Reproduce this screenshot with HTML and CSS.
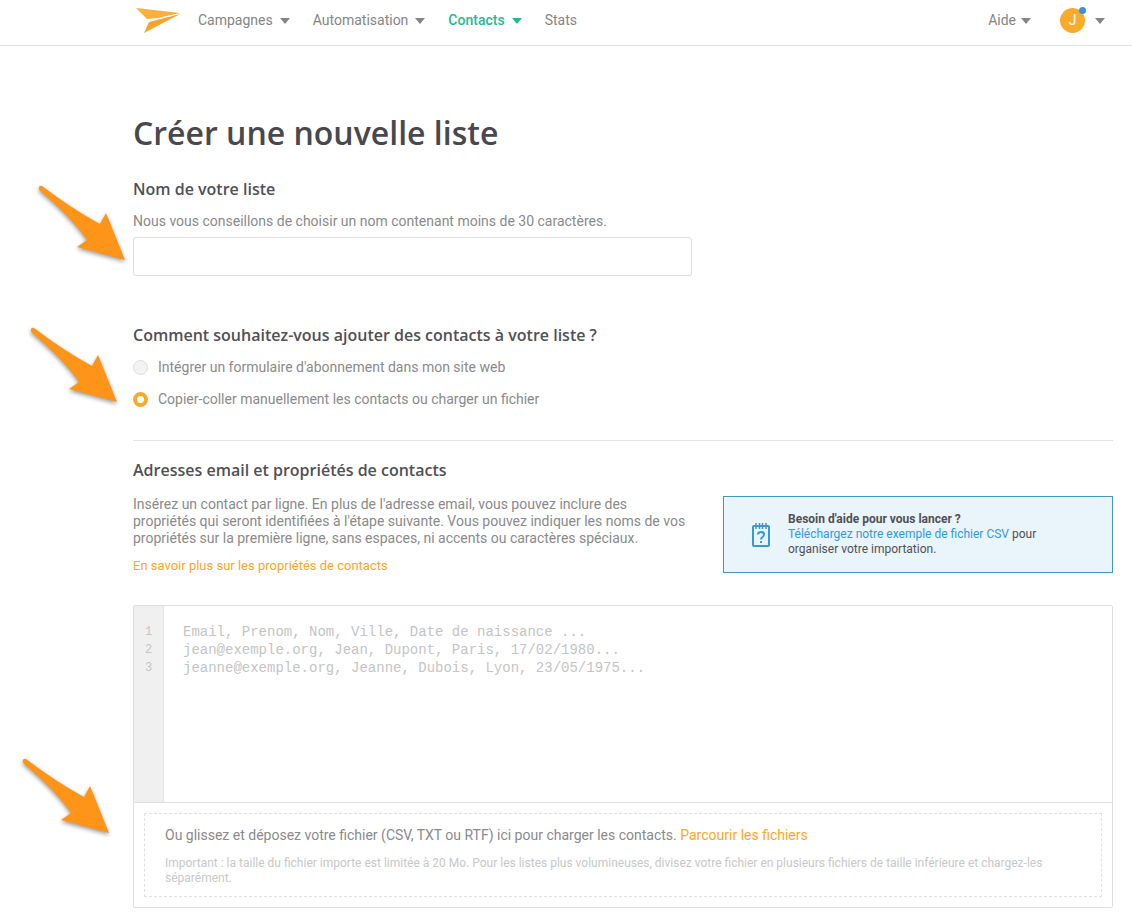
FILE: index.html
```html
<!DOCTYPE html>
<html lang="fr">
<head>
  <meta charset="UTF-8">
  <title>Créer une nouvelle liste</title>
  <meta name="viewport" content="width=device-width, initial-scale=1.0">
  <link rel="stylesheet" href="styles.css">
</head>

<body>

<svg class="sprite" aria-hidden="true">
  <symbol id="arrow" viewBox="0 0 94 86">
    <path d="M5 4 Q3 3 2 5 Q1 7 3 9 Q34 35 50 58 L40 65 L88 78 L69 31 L63 42 Q34 26 5 4 Z" fill="#ff9518"/>
  </symbol>
</svg>

<header class="topbar">
  <a href="#" class="logo" aria-label="Accueil">
    <svg width="46" height="28" viewBox="0 0 46 28">
      <path d="M1 1 L45 6 L23 11 L12 12 Z" fill="#fbb03b"/>
      <path d="M45 7 L9 26 L14 15 Z" fill="#f9a22c"/>
    </svg>
  </a>
  <nav class="menu">
    <a href="#">Campagnes <span class="caret"></span></a>
    <a href="#">Automatisation <span class="caret"></span></a>
    <a href="#" class="active">Contacts <span class="caret"></span></a>
    <a href="#">Stats</a>
  </nav>
  <div class="account">
    <a href="#" class="help">Aide <span class="caret"></span></a>
    <button type="button" class="user">
      <span class="avatar">J<span class="dot"></span></span>
      <span class="caret"></span>
    </button>
  </div>
</header>

<main class="page">
  <h1>Créer une nouvelle liste</h1>

  <form>
    <section class="block name-block">
      <svg class="pointer"><use href="#arrow"/></svg>
      <h2><label for="listName">Nom de votre liste</label></h2>
      <p class="hint">Nous vous conseillons de choisir un nom contenant moins de 30 caractères.</p>
      <input type="text" id="listName" class="text-field">
    </section>

    <section class="block method-block">
      <svg class="pointer pointer-method"><use href="#arrow"/></svg>
      <h2>Comment souhaitez-vous ajouter des contacts à votre liste ?</h2>
      <label class="choice"><input type="radio" name="method" value="form">Intégrer un formulaire d'abonnement dans mon site web</label>
      <label class="choice"><input type="radio" name="method" value="paste" checked>Copier-coller manuellement les contacts ou charger un fichier</label>
    </section>

    <section class="block contacts-block">
      <h2><label for="contacts">Adresses email et propriétés de contacts</label></h2>
      <div class="intro">
        <div class="intro-text">
          <p>Insérez un contact par ligne. En plus de l'adresse email, vous pouvez inclure des propriétés qui seront identifiées à l'étape suivante. Vous pouvez indiquer les noms de vos propriétés sur la première ligne, sans espaces, ni accents ou caractères spéciaux.</p>
          <a href="#" class="more">En savoir plus sur les propriétés de contacts</a>
        </div>
        <aside class="tip">
          <svg width="18" height="24" viewBox="0 0 18 24" fill="none" stroke="#3498db" stroke-width="2">
            <rect x="1" y="3" width="16" height="20" rx="1"/>
            <path d="M4 0 V6 M7.500 0 V6 M10.500 0 V6 M14 0 V6" stroke-width="1.500"/>
            <path d="M6 11.500 Q6 9 9 9 Q12 9 12 11.500 Q12 13 10.500 14 Q9 15 9 16.500"/>
            <path d="M9 18 V20"/>
          </svg>
          <p><b>Besoin d'aide pour vous lancer ?</b><br><a href="#">Téléchargez notre exemple de fichier CSV</a> pour<br>organiser votre importation.</p>
        </aside>
      </div>

      <div class="editor">
        <svg class="pointer pointer-drop"><use href="#arrow"/></svg>
        <div class="editor-input">
          <div class="gutter">1<br>2<br>3</div>
          <textarea id="contacts" placeholder="Email, Prenom, Nom, Ville, Date de naissance ...&#10;jean@exemple.org, Jean, Dupont, Paris, 17/02/1980...&#10;jeanne@exemple.org, Jeanne, Dubois, Lyon, 23/05/1975..."></textarea>
        </div>
        <div class="drop-area">
          <div class="drop-zone">
            <p>Ou glissez et déposez votre fichier (CSV, TXT ou RTF) ici pour charger les contacts. <a href="#">Parcourir les fichiers</a></p>
            <p class="note">Important : la taille du fichier importe est limitée à 20 Mo. Pour les listes plus volumineuses, divisez votre fichier en plusieurs fichiers de taille inférieure et chargez-les séparément.</p>
          </div>
        </div>
      </div>
    </section>
  </form>
</main>

</body>
</html>
```
FILE: styles.css
```css
* {
  box-sizing: border-box;
}

body {
  margin: 0;
  background: #fff;
  color: #8a8a8a;
  font-family: Roboto, sans-serif;
  font-size: 14px;
  line-height: 17px;
}

h1, h2, p {
  margin: 0;
}

a {
  color: #f9a825;
  text-decoration: none;
}

.sprite {
  display: none;
}

/* Header */
.topbar {
  display: flex;
  align-items: center;
  height: 46px;
  padding: 0 27px 4px 135px;
  border-bottom: 1px solid #dedede;
}

.logo {
  display: flex;
  margin-right: 17px;
}

.menu {
  display: flex;
  gap: 23px;
}

.menu a,
.help {
  display: flex;
  align-items: center;
  gap: 7px;
  color: #858585;
}

.menu a.active {
  color: #2bb793;
  font-weight: 500;
}

.caret {
  border: 5px solid transparent;
  border-top: 6px solid currentColor;
  border-bottom: 0;
}

.account {
  display: flex;
  align-items: center;
  gap: 29px;
  margin-left: auto;
}

.help {
  gap: 5px;
}

.user {
  display: flex;
  align-items: center;
  gap: 10px;
  padding: 0;
  border: none;
  background: none;
  color: #858585;
  font: inherit;
  cursor: pointer;
}

.avatar {
  position: relative;
  width: 25px;
  height: 25px;
  border-radius: 50%;
  background: #fbab2c;
  color: #fff;
  line-height: 25px;
  text-align: center;
}

.dot {
  position: absolute;
  top: -1px;
  right: -1px;
  width: 7px;
  height: 7px;
  border-radius: 50%;
  background: #3b8ee0;
}

/* Page */
.page {
  padding: 64px 19px 11px 133px;
}

h1 {
  color: #48484d;
  font-family: "Open Sans", sans-serif;
  font-size: 32px;
  font-weight: 600;
  line-height: 46px;
}

h2 {
  color: #505055;
  font-family: "Open Sans", sans-serif;
  font-size: 16px;
  font-weight: 600;
  line-height: 22px;
}

.block {
  position: relative;
}

.name-block {
  padding-top: 22px;
}

.hint {
  margin-top: 13px;
}

.text-field {
  display: block;
  width: 559px;
  max-width: 100%;
  height: 39px;
  margin-top: 7px;
  padding: 0 12px;
  border: 1px solid #dedede;
  border-radius: 3px;
  font: inherit;
}

.method-block {
  padding: 48px 0 32px;
  border-bottom: 1px solid #e2e2e2;
}

.choice {
  display: flex;
  align-items: center;
  gap: 10px;
  margin-top: 15px;
}

.method-block h2 {
  margin-bottom: 13px;
}

.method-block h2 + .choice {
  margin-top: 0;
}

.choice input {
  appearance: none;
  width: 15px;
  height: 15px;
  margin: 0;
  border: 1px solid #dedede;
  border-radius: 50%;
  background: #f3f3f3;
}

.choice input:checked {
  border: 4px solid #f9a82f;
  background: #fff;
}

.contacts-block {
  padding-top: 18px;
}

.intro {
  display: flex;
  justify-content: space-between;
  align-items: flex-start;
  gap: 32px;
  margin-top: 15px;
}

.intro-text {
  flex: 1;
  max-width: 560px;
}

.more {
  display: block;
  margin-top: 10px;
  font-size: 13px;
}

.tip {
  display: flex;
  align-items: center;
  gap: 18px;
  width: 390px;
  padding: 15px 48px 15px 28px;
  border: 1px solid #4595c4;
  background: #eaf4fb;
  color: #505055;
  font-size: 12px;
  line-height: 15px;
}

.tip svg {
  flex: none;
}

.tip a {
  color: #3498db;
}

/* Contacts editor */
.editor {
  position: relative;
  margin-top: 31px;
  border: 1px solid #dedede;
  border-radius: 2px;
}

.editor-input {
  display: flex;
  border-bottom: 1px solid #dedede;
  font-family: "Liberation Mono", monospace;
  line-height: 18px;
}

.gutter {
  width: 30px;
  padding-top: 17px;
  border-right: 1px solid #e4e4e4;
  background: #f0f0f0;
  color: #c4c4c4;
  font-size: 12px;
  text-align: center;
}

textarea {
  display: block;
  flex: 1;
  height: 196px;
  padding: 17px 19px;
  border: none;
  outline: none;
  resize: none;
  font: inherit;
}

textarea::placeholder {
  color: #c4c4c4;
}

.drop-area {
  padding: 10px;
}

.drop-zone {
  padding: 13px 48px 10px 20px;
  border: 1px dashed #e2e2e2;
}

.note {
  margin-top: 12px;
  color: #c8c8c8;
  font-size: 12px;
  line-height: 15px;
}

/* Orange arrows in the left margin */
.pointer {
  position: absolute;
  top: 26px;
  left: -96px;
  width: 94px;
  height: 86px;
  filter: drop-shadow(0 2px 2px rgba(0, 0, 0, 0.4));
}

.pointer-method {
  top: 48px;
  left: -104px;
}

.pointer-drop {
  top: 149px;
  left: -113px;
}
```
